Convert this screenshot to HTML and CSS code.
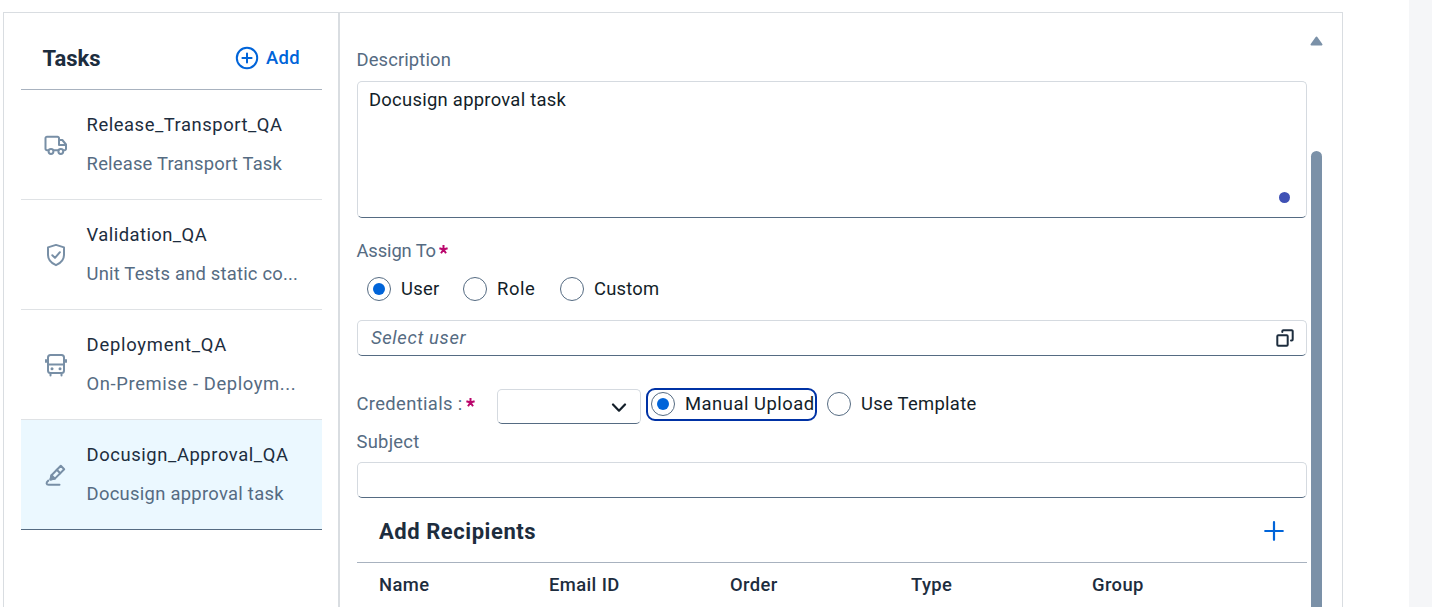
FILE: index.html
```html
<!DOCTYPE html>
<html lang="en">
<head>
<meta charset="utf-8">
<title>Tasks</title>
<link rel="stylesheet" href="styles.css">
</head>
<body>
<div class="page">
  <main class="panel">
    <aside class="sidebar">
      <header class="side-head">
        <h2 class="title tasks-title">Tasks</h2>
        <button class="add"><svg width="24" height="24" viewBox="0 0 24 24" fill="none" stroke="currentColor" stroke-width="2" stroke-linecap="round"><circle cx="12" cy="12" r="10.200"/><path d="M12 7.400v9.200M7.400 12h9.200"/></svg><span>Add</span></button>
      </header>
      <ul class="tasks">
        <li class="task">
          <svg class="icon" width="24" height="22" viewBox="0 0 24 22" fill="none" stroke="currentColor" stroke-width="2" stroke-linejoin="round" stroke-linecap="round"><path d="M4 16.200H3A1.500 1.500 0 0 1 1.500 14.700V4.200A1.500 1.500 0 0 1 3 2.700H13.500A1.500 1.500 0 0 1 15 4.200V11H21.500M15 6H18.300L22 10.500V14.700A1.500 1.500 0 0 1 20.500 16.200H19.500M9.800 16.200H14.500"/><circle cx="7" cy="17.500" r="2.400"/><circle cx="16.800" cy="17.500" r="2.400"/></svg>
          <div class="task-text"><div class="name n1">Release_Transport_QA</div><div class="desc d1">Release Transport Task</div></div>
        </li>
        <li class="task">
          <svg class="icon" width="24" height="24" viewBox="0 0 24 24" fill="none" stroke="currentColor" stroke-width="2" stroke-linejoin="round" stroke-linecap="round"><path d="M12 1.900L20 4.400V12C20 17 16.500 20.200 12 22.200C7.500 20.200 4 17 4 12V4.400Z"/><path d="M8.300 12.200L11 14.900L15.900 9.200"/></svg>
          <div class="task-text"><div class="name n2">Validation_QA</div><div class="desc d2">Unit Tests and static co...</div></div>
        </li>
        <li class="task">
          <svg class="icon" width="24" height="24" viewBox="0 0 24 24" fill="none" stroke="currentColor" stroke-width="2" stroke-linejoin="round" stroke-linecap="round"><rect x="4" y="2" width="16" height="18" rx="2.500"/><path d="M4 11.500H20M2 7V9M22 7V9M2 8H4M20 8H22M6.500 20V22.500M17.500 20V22.500"/><circle cx="8" cy="15.800" r="1.500" fill="currentColor" stroke="none"/><circle cx="16" cy="15.800" r="1.500" fill="currentColor" stroke="none"/></svg>
          <div class="task-text"><div class="name n3">Deployment_QA</div><div class="desc d3">On-Premise - Deploym...</div></div>
        </li>
        <li class="task selected">
          <svg class="icon" width="24" height="24" viewBox="0 0 24 24" fill="none" stroke="currentColor" stroke-width="2" stroke-linejoin="round" stroke-linecap="round"><path d="M7.500 12.200L16.800 2.800L20.200 6.200L10.900 15.600L6.500 16.500Z"/><path d="M7.500 12.200L10.900 15.600L6.500 16.500Z" fill="currentColor"/><path d="M12.800 6.800L16.200 10.200"/><path d="M4.300 17.600C1.500 19.700 2.500 21.800 4.600 21.800H15.500"/></svg>
          <div class="task-text"><div class="name n4">Docusign_Approval_QA</div><div class="desc d4">Docusign approval task</div></div>
        </li>
      </ul>
    </aside>
    <section class="form">
      <div class="fields">
        <label class="label l-desc"><span>Description</span></label>
        <div class="box area"><span>Docusign approval task</span><i class="dot"></i></div>
        <label class="label l-assign"><span>Assign To</span><svg class="req" width="9" height="9" viewBox="0 0 9 9" stroke="currentColor" stroke-width="2"><path d="M4.500 4.500V0M4.500 4.500L.4 3.200M4.500 4.500L8.600 3.200M4.500 4.500L2 8.200M4.500 4.500L7 8.200"/></svg></label>
        <div class="radios">
          <span class="radio on"><i></i><span class="r1">User</span></span>
          <span class="radio"><i></i><span class="r2">Role</span></span>
          <span class="radio"><i></i><span class="r3">Custom</span></span>
        </div>
        <div class="box user"><em>Select user</em><svg width="18" height="18" viewBox="0 0 18 18" fill="none" stroke="currentColor" stroke-width="2" stroke-linejoin="round" stroke-linecap="round"><rect x="1.300" y="6.300" width="10.400" height="10.400" rx="1"/><path d="M6.300 3V2.200A1 1 0 0 1 7.300 1.200H15.700A1 1 0 0 1 16.700 2.200V10.600A1 1 0 0 1 15.700 11.600H15"/></svg></div>
        <div class="cred">
          <label class="label l-cred"><span>Credentials :</span><svg class="req" width="9" height="9" viewBox="0 0 9 9" stroke="currentColor" stroke-width="2"><path d="M4.500 4.500V0M4.500 4.500L.4 3.200M4.500 4.500L8.600 3.200M4.500 4.500L2 8.200M4.500 4.500L7 8.200"/></svg></label>
          <div class="box select"><svg width="16" height="10" viewBox="0 0 16 10" fill="none" stroke="currentColor" stroke-width="2.200" stroke-linecap="round" stroke-linejoin="round"><path d="M2 1.500L8 7.700L14 1.500"/></svg></div>
          <span class="radio on focus"><i></i><span class="r4">Manual Upload</span></span>
          <span class="radio tmpl"><i></i><span class="r5">Use Template</span></span>
        </div>
        <label class="label l-subj"><span>Subject</span></label>
        <div class="box subject"></div>
        <header class="rec-head"><h2 class="title rec-title">Add Recipients</h2><svg width="20" height="20" viewBox="0 0 20 20" stroke="currentColor" stroke-width="2.200" stroke-linecap="round"><path d="M10 1.200V18.800M1.200 10H18.800"/></svg></header>
        <div class="cols"><span>Name</span><span>Email ID</span><span>Order</span><span>Type</span><span>Group</span></div>
      </div>
      <div class="scroll">
        <svg width="13" height="10" viewBox="0 0 13 10"><path d="M6.500 1.500L11.500 8.500H1.500Z" fill="currentColor" stroke="currentColor" stroke-width="2" stroke-linejoin="round"/></svg>
        <div class="thumb"></div>
      </div>
    </section>
  </main>
  <div class="gutter"></div>
</div>
</body>
</html>
```
FILE: styles.css
```css
* { box-sizing: border-box; }
body { margin: 0; overflow: hidden; background: #fff; color: #1d2d3e; font: 18.4px/24px Roboto, "Liberation Sans", sans-serif; letter-spacing: .12px; }
.page { display: flex; justify-content: space-between; height: 607px; overflow: hidden; }
.panel { display: flex; width: 1340px; height: 595px; margin: 12px 0 0 3px; border: 1px solid #d9dde1; border-bottom: 0; overflow: hidden; }
.gutter { width: 23px; background: #f5f6f8; }
.sidebar { width: 336px; padding: 0 16px 0 17px; border-right: 2px solid #d9dde1; flex: none; }
.side-head { display: flex; align-items: center; justify-content: space-between; height: 77px; padding: 16px 22px 0 21.5px; border-bottom: 1px solid #a8b2bf; }
.title { margin: 0; font-size: 22px; line-height: 28px; font-weight: 700; letter-spacing: 0; white-space: nowrap; }
.add { display: flex; align-items: center; gap: 7px; padding: 0; border: 0; background: none; color: #0064d9; font: 500 18.4px/24px Roboto, sans-serif; letter-spacing: .4px; margin-top: -2px; }
.tasks { margin: 0; padding: 0; list-style: none; }
.task { display: flex; align-items: center; gap: 18.6px; height: 110px; padding: 0 0 0 23px; border-bottom: 1px solid #dfe2e5; }
.icon { flex: none; width: 24px; color: #788fa6; }
.task.selected { background: #ebf8ff; border-bottom-color: #556b82; }
.task-text { display: flex; flex-direction: column; gap: 15px; white-space: nowrap; }
.n1 { letter-spacing: .54px; }
.n2 { letter-spacing: .45px; }
.n3 { letter-spacing: .75px; }
.n4 { letter-spacing: .58px; }
.d1, .d2 { letter-spacing: .2px; }
.d3 { letter-spacing: .6px; }
.d4, .area { letter-spacing: .28px; }
.desc, .label { color: #556b82; }
.form { display: flex; flex: 1; gap: 4px; padding-left: 17px; }
.fields { width: 950px; padding-top: 35px; color: #131e29; }
.label { display: flex; height: 24px; white-space: nowrap; }
.label span { margin-left: -.5px; }
.req { display: block; margin: 6px 0 0 3px; color: #ba066c; }
.box { display: flex; border: 1px solid #d5dae0; border-bottom-color: #556b82; border-radius: 5px; }
.area { position: relative; height: 137px; margin-top: 9px; padding: 6px 11px; }
.dot { position: absolute; right: 16px; bottom: 14px; width: 11px; height: 11px; border-radius: 50%; background: #3f51b5; }
.l-assign { margin-top: 21px; letter-spacing: -.14px; }
.radios { display: flex; gap: 23px; height: 26px; margin: 13px 0 0 10px; }
.radio { display: flex; align-items: center; gap: 10px; white-space: nowrap; }
.radio i { display: flex; flex: none; align-items: center; justify-content: center; width: 24px; height: 24px; border: 1.5px solid #556b82; border-radius: 50%; background: #fff; }
.radio.on i::after { content: ""; width: 12px; height: 12px; border-radius: 50%; background: #0064d9; }
.r1 { width: 39px; letter-spacing: .3px; }
.r2 { width: 40px; letter-spacing: .6px; }
.r3 { letter-spacing: .22px; }
.r4 { letter-spacing: .52px; }
.r5 { letter-spacing: .3px; }
.user { height: 36px; margin-top: 18px; padding: 5px 12.5px 5px 13px; align-items: center; justify-content: space-between; }
.user em { color: #556b82; margin-top: -1px; letter-spacing: .65px; }
.user svg { color: #1d2d3e; }
.cred { display: flex; height: 36px; margin-top: 32px; }
.l-cred { width: 140px; margin-top: 4px; letter-spacing: .35px; }
.select { width: 144px; height: 35px; margin-top: 1px; padding: 2px 13px 0 0; align-items: center; justify-content: flex-end; }
.cred .focus { width: 171px; height: 33px; margin-left: 5px; padding: 0 0 2px 3px; border: 2px solid #0032a5; border-radius: 9px; }
.tmpl { height: 32px; margin-left: 10px; }
.l-subj { margin-top: 6px; letter-spacing: .25px; }
.subject { height: 36px; margin-top: 8px; }
.rec-head { display: flex; align-items: center; justify-content: space-between; height: 65px; padding: 2px 23.5px 0 22px; border-bottom: 1px solid #a8b2bf; color: #1d2d3e; }
.rec-title { letter-spacing: .55px; margin-top: 2px; }
.rec-head svg { color: #0064d9; }
.cols { display: grid; grid-template-columns: 170px 181px 181px 181px 1fr; padding: 10px 0 0 22px; font-weight: 500; letter-spacing: .4px; color: #1d2d3e; }
.scroll { width: 12px; display: flex; flex-direction: column; color: #7b91a8; }
.scroll svg { flex: none; margin: 23px 0 0 -1px; }
.thumb { width: 11px; height: 480px; flex: none; margin-top: 105px; border-radius: 6px; background: currentColor; }
```
